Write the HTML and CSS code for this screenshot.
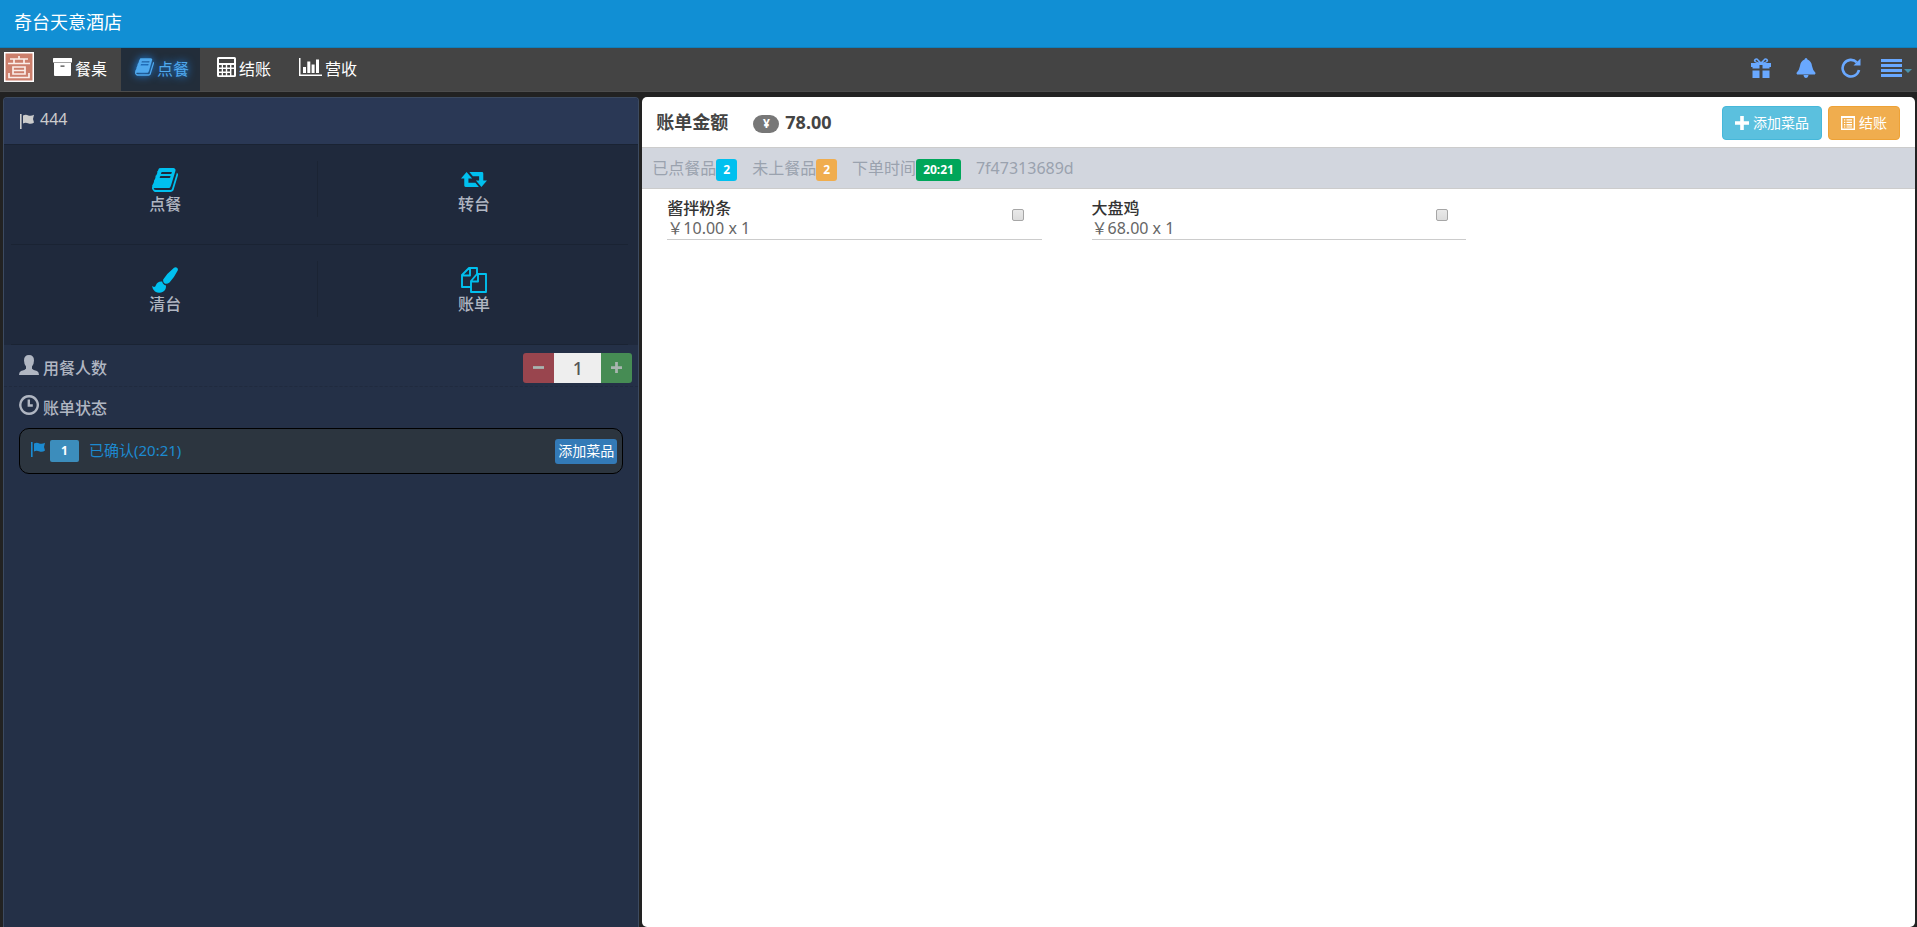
FILE: index.html
```html
<!DOCTYPE html>
<html lang="zh-CN">
<head>
<meta charset="utf-8">
<title>奇台天意酒店</title>
<link rel="stylesheet" href="styles.css">
</head>
<body>
<svg class="sprite" aria-hidden="true">
  <symbol id="book" viewBox="0 0 1664 1536"><path d="M1639 350q40 57 18 129l-275 906q-19 64-76.500 107.500t-122.500 43.500h-923q-77 0-148.500-53.500t-99.500-131.500q-24-67-2-127 0-4 3-27t4-37q1-8-3-21.500t-3-19.500q2-11 8-21t16.500-23.500 16.500-23.500q23-38 45-91.500t30-91.500q3-10 .5-30t-.5-28q3-11 17-28t17-23q21-36 42-92t25-90q1-9-2.500-32t.5-28q4-13 22-30.500t22-22.500q19-26 42.500-84.500t27.500-96.500q1-8-3-25.500t-2-26.500q2-8 9-18t18-23 17-21q8-12 16.500-30.500t15-35 16-36 19.500-32 26.500-23.500 36-11.500 47.500 5.500l-1 3q38-9 51-9h761q74 0 114 56t18 130l-274 906q-36 119-71.500 153.500t-128.500 34.500h-869q-27 0-38 15-11 16-1 43 24 70 144 70h923q29 0 56-15.500t35-41.500l300-987q7-22 5-57 38 15 59 43zm-1064 2q-4 13 2 22.500t20 9.500h608q13 0 25.500-9.500t16.500-22.500l21-64q4-13-2-22.500t-20-9.500h-608q-13 0-25.500 9.500t-16.500 22.500zm-83 256q-4 13 2 22.500t20 9.500h608q13 0 25.500-9.500t16.500-22.500l21-64q4-13-2-22.500t-20-9.500h-608q-13 0-25.500 9.500t-16.500 22.500z"/></symbol>
  <symbol id="flag" viewBox="0 0 14 15"><path d="M0 0h1.600v15H0zM3 1.500C5 .3 6.700.4 8.300 1.400 10 2.200 12 1.900 14 .8L13 5l1 3.600C12.200 10 10 10.300 8 9.200 6.300 8.300 4.600 8.500 3 9.500z"/></symbol>
  <symbol id="list" viewBox="0 0 14 14"><path fill-rule="evenodd" d="M0 0h14v14H0zM1.400 2v10.600h11.200V2zM3 3.300h1.300v1.300H3zm2.500 0H11v1.300H5.500zM3 5.700h1.300V7H3zm2.500 0H11V7H5.500zM3 8.100h1.300v1.300H3zm2.500 0H11v1.300H5.500zM3 10.400h1.300v1.200H3zm2.500 0H11v1.200H5.500z"/></symbol>
</svg>

<header class="brand">奇台天意酒店</header>

<nav class="nav">
  <a class="seal" href="#" aria-label="首页">
    <svg viewBox="0 0 30 30"><rect width="30" height="30" fill="#fff"/><rect x="1.500" y="1.500" width="27" height="27" fill="#cc7f6c"/><path d="M15 4v3M6 7h18M10 7.500v3.500M20 7.500v3.500M4 11.500h22M9 15h12v7H9zM9 18.500h12M5 21v4.500h5.500M10 25.500h10M20 25.500h5V21" fill="none" stroke="#fbeee9" stroke-width="1.700"/></svg>
  </a>
  <a class="tab" href="#">
    <svg class="i-box" viewBox="0 0 19 18"><path d="M.5 0h18q.5 0 .5.500V4q0 .5-.5.500H.5Q0 4.500 0 4V.5Q0 0 .5 0z"/><path fill-rule="evenodd" d="M1 5h17V17q0 1-1 1H2q-1 0-1-1zM7.500 7.500v1.200h4V7.500z"/></svg>餐桌</a>
  <a class="tab active" href="#" aria-current="page"><svg class="i-book"><use href="#book"/></svg>点餐</a>
  <a class="tab" href="#">
    <svg class="i-calc" viewBox="0 0 19 20"><path fill-rule="evenodd" d="M1.500 0h16Q19 0 19 1.500v17q0 1.500-1.500 1.500h-16Q0 20 0 18.500v-17Q0 0 1.500 0zM2 2v4h15V2zM2 8v2.500h2.700V8zm4 0v2.500h2.800V8zm4.200 0v2.500H13V8zm4.200 0v2.500H17V8zM2 12v2.500h2.700V12zm4 0v2.500h2.800V12zm4.200 0v2.500H13V12zM2 16v2.300h2.700V16zm4 0v2.300h2.800V16zm4.200 0v2.300H13V16zm4.200-4v6.300H17V12z"/></svg>结账</a>
  <a class="tab" href="#">
    <svg class="i-chart" viewBox="0 0 23 18"><path d="M0 0h1.500v16.500H23V18H0zM4 9h3v6H4zM8.300 3.500h3V15h-3zM12.600 6.500h3V15h-3zM17 1.500h3V15h-3z"/></svg>营收</a>
  <div class="tools">
    <button type="button" aria-label="礼品"><svg viewBox="0 0 20 20"><path fill-rule="evenodd" d="M0 5h6L3.500 4Q2 2.500 3.500 1 5 0 6.500.5L10 4 13.500.5Q15 0 16.500 1q1.500 1.500 0 3L14 5h6v4h-1.500v1.500h-7V7h-3v3.500h-7V9H0zm4.500-3L5 3.500l3 1L5.800 1.800zm11 0L15 3.500l-3 1 2.200-2.700zM1.500 12.500h7V20h-7zM11.500 12.500h7V20h-7z"/></svg></button>
    <button type="button" aria-label="通知"><svg viewBox="0 0 20 20"><path d="M10 0q1.400 0 1.400 1.500Q15.500 3 16 8q.5 4 4 7.500H0Q3.500 12 4 8q.5-5 4.600-6.500Q8.600 0 10 0zM1 15h18v1.500H1zM7.500 17h5q-.5 3-2.500 3t-2.500-3z"/></svg></button>
    <button type="button" aria-label="刷新"><svg viewBox="0 0 20 20"><path d="M18 12A8.300 8.300 0 1 1 15.800 4.300" fill="none" stroke="currentColor" stroke-width="2.600"/><path d="M19.500.5v7h-7z"/></svg></button>
    <button type="button" class="menu" aria-label="菜单"><svg viewBox="0 0 21 18"><path d="M0 0h21v3H0zM0 5h21v3H0zM0 10h21v3H0zM0 15h21v3H0z"/></svg><span class="caret"></span></button>
  </div>
</nav>

<main class="main">
  <section class="panel">
    <h2 class="panel-head"><svg class="i-flag"><use href="#flag"/></svg>444</h2>
    <div class="tiles">
      <a class="tile" href="#"><svg class="i-tile"><use href="#book"/></svg>点餐</a>
      <a class="tile" href="#"><svg class="i-tile" viewBox="0 0 28 24"><path d="M6 3.500l6 7H8V15h7.500l3.800 4.500H5q-1.500 0-1.500-1.500v-7.500H0zM9 3.500h13.500q1.500 0 1.500 1.500v7.500h4l-6 7-6-7h3.500V8H12.800z"/></svg>转台</a>
      <a class="tile" href="#"><svg class="i-tile" viewBox="0 0 26 26"><path d="M24.500.4q2 1 1.200 3.200Q22 11 17.500 15.500 15 17.500 12.700 16.500q-2-1.500-1.500-4Q15 6.500 22 .8 23.300-.1 24.500.4zM10.200 14.500q.5 3 3.800 4 .3 4-3 6.200-4 2.300-8-.2-2.500-2-3-5.500l2 1q1.500 0 2-2 1.500-4 6.200-3.500z"/></svg>清台</a>
      <a class="tile" href="#"><svg class="i-tile" viewBox="0 0 26 26"><path d="M10 20H1V8l7-7h8v6M9 1v7.500H1M16 7h9v18H10V14zM17 7v7.500h-7" fill="none" stroke="currentColor" stroke-width="1.900" stroke-linejoin="round"/></svg>账单</a>
    </div>
    <div class="row guests">
      <label for="guests"><svg class="i-row" viewBox="0 0 20 20"><path d="M10 0q5 0 5 5.500 0 3.500-2 6v2.200q1 1.300 5 2.300 2 .8 2 4H0q0-3.200 2-4 4-1 5-2.300v-2.200q-2-2.500-2-6Q5 0 10 0z"/></svg>用餐人数</label>
      <div class="stepper">
        <button type="button" class="minus" aria-label="减少"><svg viewBox="0 0 12 12"><path d="M0 4.500h12v3H0z"/></svg></button>
        <input id="guests" type="text" value="1">
        <button type="button" class="plus" aria-label="增加"><svg viewBox="0 0 12 12"><path d="M4.500 0h3v4.500H12v3H7.500V12h-3V7.500H0v-3h4.500z"/></svg></button>
      </div>
    </div>
    <div class="row status"><svg class="i-row" viewBox="0 0 20 20"><path d="M10 1.300a8.700 8.700 0 1 0 .1 0zM9.800 4.500v6h4" fill="none" stroke="currentColor" stroke-width="2.400"/></svg>账单状态</div>
    <div class="order">
      <svg class="i-flag"><use href="#flag"/></svg>
      <span class="num">1</span>
      <span class="state">已确认(20:21)</span>
      <button type="button" class="add-small">添加菜品</button>
    </div>
  </section>

  <section class="bill">
    <div class="bill-head">
      <h1>账单金额</h1>
      <span class="yen">¥</span><strong>78.00</strong>
      <button type="button" class="btn info"><svg viewBox="0 0 14 14"><path d="M5.200 0h3.600v5.200H14v3.600H8.800V14H5.200V8.800H0V5.200h5.200z"/></svg>添加菜品</button>
      <button type="button" class="btn warn"><svg><use href="#list"/></svg>结账</button>
    </div>
    <div class="meta">
      <span>已点餐品<b class="label aqua">2</b></span>
      <span>未上餐品<b class="label orange">2</b></span>
      <span>下单时间<b class="label green">20:21</b></span>
      <span>7f47313689d</span>
    </div>
    <div class="dishes">
      <div class="dish"><label for="d1"><b>酱拌粉条</b><span>￥10.00 x 1</span></label><input id="d1" type="checkbox"></div>
      <div class="dish"><label for="d2"><b>大盘鸡</b><span>￥68.00 x 1</span></label><input id="d2" type="checkbox"></div>
    </div>
  </section>
</main>
</body>
</html>
```
FILE: styles.css
```css
* { box-sizing: border-box; }
body {
  margin: 0;
  min-height: 100vh;
  display: flex;
  flex-direction: column;
  background: #222;
  font: 16px/20px "Noto Sans", "Noto Sans CJK SC", sans-serif;
  color: #444;
}
a { color: inherit; text-decoration: none; }
button, input { font: inherit; }
button { border: 0; padding: 0; color: inherit; cursor: pointer; }
svg { fill: currentColor; flex: none; display: block; }
.sprite { position: absolute; width: 0; height: 0; }

.brand {
  height: 48px;
  padding: 0 14px;
  background: #118fd4;
  color: #fff;
  font-size: 18px;
  line-height: 44px;
  border-bottom: 1px solid #0e7fbd;
}

.nav {
  height: 44px;
  display: flex;
  gap: 3px;
  background: #444;
  color: #fff;
  border-bottom: 1px solid #4c4c4c;
}
.seal { padding: 4px 2px 0 4px; }
.seal svg { width: 30px; height: 30px; }
.tab {
  display: flex;
  align-items: center;
  gap: 3px;
  padding: 0 11px 2px 14px;
}
.tab.active {
  background: #222d3a;
  color: #4fa9ee;
  text-shadow: 0 0 8px #1e90ff;
}
.tab.active svg { filter: drop-shadow(0 0 4px #1e90ff); }
.i-box { width: 19px; height: 18px; }
.i-book { width: 19px; height: 18px; }
.i-calc { width: 19px; height: 20px; }
.i-chart { width: 23px; height: 18px; }
.tab svg { margin-bottom: 3px; }
.tools {
  margin-left: auto;
  padding: 0 5px 3px 0;
  display: flex;
  align-items: center;
  gap: 25px;
  color: #69a8ff;
}
.tools button { display: flex; align-items: center; background: none; }
.tools svg { width: 20px; height: 20px; }
.tools .menu { gap: 2px; margin-left: -5px; }
.tools .menu svg { width: 21px; height: 18px; }
.caret {
  margin-top: 6px;
  border: 4px solid transparent;
  border-top-color: #4a93ac;
  border-bottom: 0;
}

.main {
  flex: 1;
  display: grid;
  grid-template-columns: 1fr 2fr;
  padding: 5px 2px 0 3px;
  gap: 3px;
}

.panel {
  border: 1px solid #3c4a60;
  border-bottom: 0;
  border-radius: 4px 4px 0 0;
  background: #243047;
  color: #b0b6c2;
}
.panel-head {
  margin: 0;
  height: 47px;
  display: flex;
  align-items: center;
  gap: 6px;
  padding: 0 16px 5px;
  background: #2a3855;
  border-bottom: 1px solid #1a2333;
  border-radius: 3px 3px 0 0;
  font-size: 16px;
  font-weight: 400;
  color: #ccc;
}
.i-flag { width: 14px; height: 15px; }
.panel-head .i-flag { margin-top: 6px; }

.tiles {
  display: grid;
  grid-template-columns: 1fr 1fr;
  background: #1f293c;
  padding: 0 10px 0 7px;
}
.tile {
  height: 100px;
  display: flex;
  flex-direction: column;
  align-items: center;
  padding-top: 22px;
  gap: 1px;
  border-bottom: 1px solid #1a2333;
  font-weight: 500;
}
.tile:nth-child(odd) {
  background: linear-gradient(#1b2434, #1b2434) right 2px top 16px / 1px 56px no-repeat;
}
.i-tile { width: 26px; height: 26px; color: #00c0ef; }
.tile:first-child .i-tile { height: 24px; margin: 1px 0; }

.row { display: flex; align-items: center; padding: 0 6px 0 15px; font-weight: 500; }
.row label { display: flex; align-items: center; gap: 4px; }
.i-row { width: 20px; height: 20px; margin-bottom: 5px; }
.guests { height: 42px; padding-top: 4px; border-bottom: 1px dashed #202a3e; }
.stepper { margin-left: auto; display: flex; height: 30px; }
.stepper button {
  width: 31px;
  display: grid;
  place-items: center;
  color: #a9b5b0;
}
.stepper svg { width: 11px; height: 11px; }
.minus { background: #99454e; border-radius: 3px 0 0 3px; }
.plus { background: #468c54; border-radius: 0 3px 3px 0; }
.stepper input {
  width: 47px;
  border: 0;
  padding: 0;
  background: #eee;
  color: #555;
  font-size: 18px;
  text-align: center;
}
.status { height: 41px; gap: 4px; }

.order {
  margin: 0 15px;
  height: 46px;
  display: flex;
  align-items: center;
  padding: 0 5px 0 11px;
  background: #2c353f;
  border: 1px solid #000;
  border-radius: 10px;
  color: #1c8ad0;
  font-size: 15px;
}
.order .i-flag { margin-bottom: 4px; }
.num {
  width: 29px;
  margin: 0 10px 0 5px;
  border-radius: 2px;
  background: #3c8dbc;
  color: #fff;
  font-size: 12px;
  font-weight: 700;
  line-height: 22px;
  text-align: center;
}
.state { padding-bottom: 2px; }
.add-small {
  margin-left: auto;
  height: 25px;
  padding: 0 3px;
  border-radius: 3px;
  background: #337ab7;
  color: #fff;
  font-size: 14px;
}

.bill { background: #fff; border-radius: 5px; }
.bill-head {
  height: 50px;
  display: flex;
  align-items: center;
  padding: 2px 15px 0 14px;
  font-size: 18px;
}
.bill-head h1 { margin: 0; padding-bottom: 2px; font-size: 18px; font-weight: 700; }
.bill-head strong { margin-right: auto; padding-bottom: 2px; }
.yen {
  margin: 2px 6px 0 25px;
  width: 26px;
  border-radius: 9px;
  background: #777;
  color: #fff;
  font-size: 12px;
  font-weight: 700;
  line-height: 18px;
  text-align: center;
}
.btn {
  height: 34px;
  display: flex;
  align-items: center;
  gap: 4px;
  padding: 0 12px;
  border-radius: 4px;
  color: #fff;
  font-size: 14px;
}
.btn svg { width: 14px; height: 14px; }
.info { background: #5bc0de; border: 1px solid #46b8da; }
.warn { background: #f0ad4e; border: 1px solid #eea236; margin-left: 6px; }

.meta {
  height: 42px;
  display: flex;
  align-items: center;
  gap: 15px;
  padding: 0 10px;
  background: #d2d6de;
  border: 1px solid #ccc;
  border-width: 1px 0;
  color: #9aa2ae;
}
.meta span { display: flex; align-items: center; }
.label {
  margin-top: 3px;
  padding: 0 7px;
  border-radius: 3px;
  color: #fff;
  font-size: 12px;
  line-height: 22px;
}
.aqua { background: #00c0ef; }
.orange { background: #f0ad4e; }
.green { background: #00a65a; }

.dishes { display: grid; grid-template-columns: repeat(3, 1fr); }
.dish {
  margin: 0 25px;
  padding: 9px 18px 0 0;
  height: 51px;
  display: flex;
  justify-content: space-between;
  border-bottom: 1px solid #ccc;
}
.dish label { display: flex; flex-direction: column; color: #666; }
.dish b { color: #333; font-weight: 500; }
.dish input {
  appearance: none;
  width: 12px;
  height: 12px;
  margin: 11px 0 0;
  border: 1px solid #a6a6a6;
  border-radius: 2px;
  background: linear-gradient(#e9e9e9, #dcdcdc);
}
```
